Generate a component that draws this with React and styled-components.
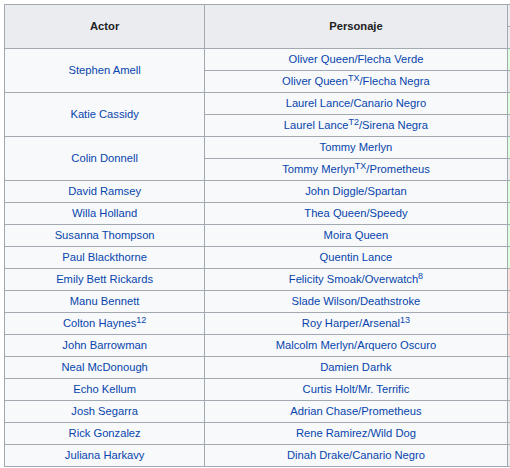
import React from "react";
import styled, { createGlobalStyle } from "styled-components";

const Global = createGlobalStyle`
  html, body { margin: 0; padding: 0; background: #ffffff; overflow: hidden; }
  body { font-family: "Liberation Sans", Arial, sans-serif; }
`;

const Page = styled.div`
  padding: 4px 0 0 4px;
`;

const Table = styled.table`
  border-collapse: collapse;
  table-layout: fixed;
  width: 760px;
  background: #f8f9fa;
  color: #202122;
  border: 1px solid #a2a9b1;
  font-size: 11.2px;
`;

const HeadCell = styled.th`
  background: #eaecf0;
  border: 1px solid #a2a9b1;
  font-weight: bold;
  text-align: center;
  padding: 3px 6px;
  line-height: 15px;
  height: 15px;
`;

const Cell = styled.td`
  border: 1px solid #a2a9b1;
  text-align: center;
  padding: 3px 6px;
  line-height: 15px;
  height: 15px;
  white-space: nowrap;
  overflow: hidden;
  background: ${(p) =>
    p.$status === "yes"
      ? "#ddffdd"
      : p.$status === "no"
      ? "#ffdddd"
      : p.$status === "na"
      ? "#ececec"
      : "#f8f9fa"};
`;

const Link = styled.a`
  color: #0645ad;
  text-decoration: none;
`;

const Sup = styled.sup`
  font-size: 80%;
  line-height: 1;
  vertical-align: baseline;
  position: relative;
  top: -0.45em;
  color: #0645ad;
`;

const rows = [
  { actor: "Stephen Amell", roles: [["Oliver Queen/Flecha Verde"], ["Oliver Queen", "TX", "/Flecha Negra"]], status: ["yes", "na"] },
  { actor: "Katie Cassidy", roles: [["Laurel Lance/Canario Negro"], ["Laurel Lance", "T2", "/Sirena Negra"]], status: ["yes", "na"] },
  { actor: "Colin Donnell", roles: [["Tommy Merlyn"], ["Tommy Merlyn", "TX", "/Prometheus"]], status: ["yes", "na"] },
  { actor: "David Ramsey", roles: [["John Diggle/Spartan"]], status: ["yes"] },
  { actor: "Willa Holland", roles: [["Thea Queen/Speedy"]], status: ["yes"] },
  { actor: "Susanna Thompson", roles: [["Moira Queen"]], status: ["yes"] },
  { actor: "Paul Blackthorne", roles: [["Quentin Lance"]], status: ["yes"] },
  { actor: "Emily Bett Rickards", roles: [["Felicity Smoak/Overwatch", "8", ""]], status: ["no"] },
  { actor: "Manu Bennett", roles: [["Slade Wilson/Deathstroke"]], status: ["no"] },
  { actor: "Colton Haynes", actorSup: "12", roles: [["Roy Harper/Arsenal", "13", ""]], status: ["no"] },
  { actor: "John Barrowman", roles: [["Malcolm Merlyn/Arquero Oscuro"]], status: ["no"] },
  { actor: "Neal McDonough", roles: [["Damien Darhk"]], status: ["na"] },
  { actor: "Echo Kellum", roles: [["Curtis Holt/Mr. Terrific"]], status: ["na"] },
  { actor: "Josh Segarra", roles: [["Adrian Chase/Prometheus"]], status: ["na"] },
  { actor: "Rick Gonzalez", roles: [["Rene Ramirez/Wild Dog"]], status: ["na"] },
  { actor: "Juliana Harkavy", roles: [["Dinah Drake/Canario Negro"]], status: ["na"] },
];

const seasons = [1, 2, 3, 4, 5, 6, 7, 8];

function Role({ parts }) {
  const [a, sup, b] = parts;
  return (
    <>
      <Link>{a}</Link>
      {sup && <Sup>{sup}</Sup>}
      {b && <Link>{b}</Link>}
    </>
  );
}

export default function App() {
  return (
    <Page>
      <Global />
      <Table>
        <colgroup>
          <col style={{ width: 200 }} />
          <col style={{ width: 302 }} />
          {seasons.map((s) => (
            <col key={s} style={{ width: 32 }} />
          ))}
        </colgroup>
        <thead>
          <tr>
            <HeadCell rowSpan={2}>Actor</HeadCell>
            <HeadCell rowSpan={2}>Personaje</HeadCell>
            <HeadCell colSpan={seasons.length} aria-label="Temporadas" />
          </tr>
          <tr>
            {seasons.map((s) => (
              <HeadCell key={s} aria-label={`Temporada ${s}`} />
            ))}
          </tr>
        </thead>
        <tbody>
          {rows.map((r) =>
            r.roles.map((role, i) => (
              <tr key={r.actor + i}>
                {i === 0 && (
                  <Cell rowSpan={r.roles.length}>
                    <Link>{r.actor}</Link>
                    {r.actorSup && <Sup>{r.actorSup}</Sup>}
                  </Cell>
                )}
                <Cell>
                  <Role parts={role} />
                </Cell>
                {seasons.map((s) => (
                  <Cell key={s} $status={r.status[i]} />
                ))}
              </tr>
            ))
          )}
        </tbody>
      </Table>
    </Page>
  );
}
